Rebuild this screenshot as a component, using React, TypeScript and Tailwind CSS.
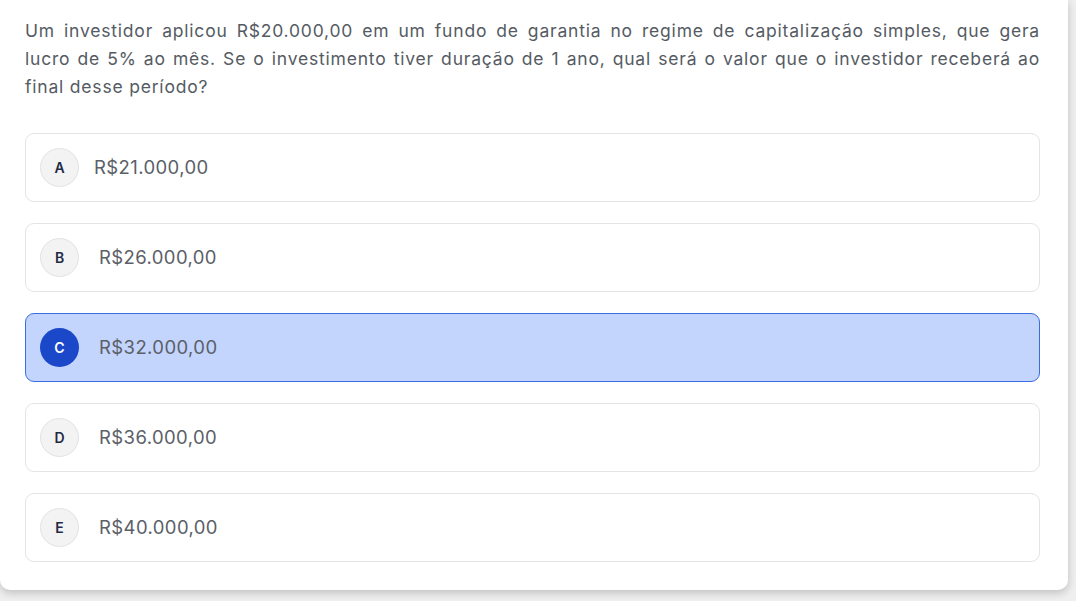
const options = [
  { letter: 'A', text: 'R$21.000,00', pad: 'ml-[15px]' },
  { letter: 'B', text: 'R$26.000,00', pad: 'ml-[20px]' },
  { letter: 'C', text: 'R$32.000,00', pad: 'ml-[20px]' },
  { letter: 'D', text: 'R$36.000,00', pad: 'ml-[20px]' },
  { letter: 'E', text: 'R$40.000,00', pad: 'ml-[20px]' },
];

export default function App() {
  const selected = 'C';

  return (
    <div className="h-[601px] w-[1076px] bg-[#efefef] overflow-hidden font-['Inter',sans-serif]">
      <div className="w-[1068px] bg-white rounded-b-[10px] shadow-[0_3px_9px_rgba(0,0,0,0.2)] pl-[25px] pr-[28px] pt-[17px] pb-[28px]">
        <p className="text-[17.5px] leading-[28px] tracking-[0.8px] text-[#555b63] text-justify">
          Um investidor aplicou R$20.000,00 em um fundo de garantia no regime de capitalização simples, que gera lucro de 5% ao mês. Se o investimento tiver duração de 1 ano, qual será o valor que o investidor receberá ao final desse período?
        </p>

        <div className="mt-[32px] flex flex-col gap-[21px]">
          {options.map(o => {
            const active = o.letter === selected;
            return (
              <div
                key={o.letter}
                className={
                  active
                    ? 'h-[69px] flex items-center pl-[14px] rounded-[9px] border-[1.5px] border-[#3a6ddf] bg-[#c3d4fd]'
                    : 'h-[69px] flex items-center pl-[14px] rounded-[9px] border border-[#e3e4e6] bg-white'
                }
              >
                <span
                  className={
                    active
                      ? 'w-[39px] h-[39px] rounded-full flex items-center justify-center bg-[#1a48c9] text-white text-[14px] font-semibold'
                      : 'w-[39px] h-[39px] rounded-full flex items-center justify-center bg-[#f3f3f4] border border-[#e1e2e4] text-[#1f2a44] text-[14px] font-semibold'
                  }
                >
                  {o.letter}
                </span>
                <span className={`${o.pad} text-[18.5px] tracking-[0.4px] text-[#5b6068]`}>{o.text}</span>
              </div>
            );
          })}
        </div>
      </div>
    </div>
  );
}
